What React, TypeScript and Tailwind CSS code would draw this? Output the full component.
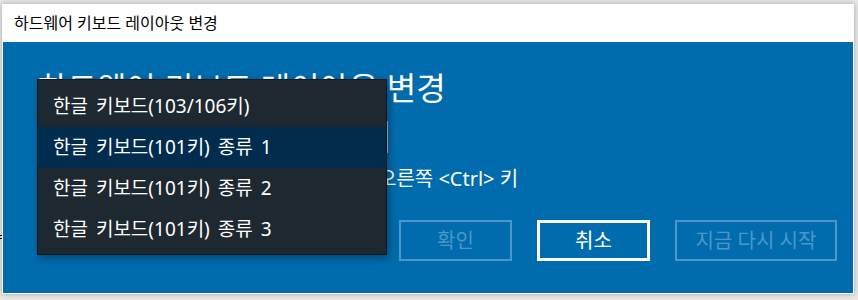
const items = [
  "한글 키보드(103/106키)",
  "한글 키보드(101키) 종류 1",
  "한글 키보드(101키) 종류 2",
  "한글 키보드(101키) 종류 3",
];

export default function App() {
  const font = { fontFamily: '"Noto Sans", "Noto Sans CJK KR", sans-serif' };

  return (
    <div className="relative w-[858px] h-[300px] bg-[#e9e9e9] pt-[4px] pl-[2px] overflow-hidden" style={font}>
      {/* bits of whatever sits behind the dialog */}
      <div className="absolute left-0 top-[235px] w-[3px] h-px bg-black" />
      <div className="absolute left-0 top-[238px] w-[3px] h-px bg-black" />

      <div className="relative w-[852px] h-[290px] bg-white px-px pb-px flex flex-col shadow-[0_0_6px_rgba(0,0,0,0.3)]">
        <div className="h-[38px] flex items-center pl-[11px] text-[16px] text-black">
          하드웨어 키보드 레이아웃 변경
        </div>

        <div className="flex-1 bg-[#006cae] flex flex-col pl-[35px] pr-[16px] pt-[25px] text-white">
          <h1 className="text-[32px] leading-[42px] font-normal">하드웨어 키보드 레이아웃 변경</h1>

          <div className="mt-[12px] h-[32px] w-[350px] border-2 border-white/60" />

          <p className="mt-[13px] flex text-[20px] leading-[26px]">
            <span className="w-[340px] shrink-0">한자 키:</span>
            <span>오른쪽 &lt;Ctrl&gt; 키</span>
          </p>

          <div className="mt-[28px] flex justify-end gap-[25px] text-[20px]">
            <button className="w-[113px] h-[41px] border-2 border-[#4d97c8] text-[#4d97c8]">확인</button>
            <button className="w-[113px] h-[41px] border-[3px] border-white text-white">취소</button>
            <button className="w-[162px] h-[41px] border-2 border-[#4d97c8] text-[#4d97c8]">지금 다시 시작</button>
          </div>
        </div>

        <div className="absolute left-[35px] top-[75px] w-[350px] h-[176px] bg-[#1e2830] border border-[#121619] pt-[6px] shadow-[2px_3px_8px_rgba(0,0,0,0.35)]">
          {items.map((item, i) => (
            <div
              key={item}
              className={
                "h-[41px] flex items-center pl-[15px] text-[19px] [word-spacing:3px] text-white " +
                (i === 1 ? "bg-[#012c4d]" : "")
              }
            >
              {item}
            </div>
          ))}
        </div>
      </div>
    </div>
  );
}
